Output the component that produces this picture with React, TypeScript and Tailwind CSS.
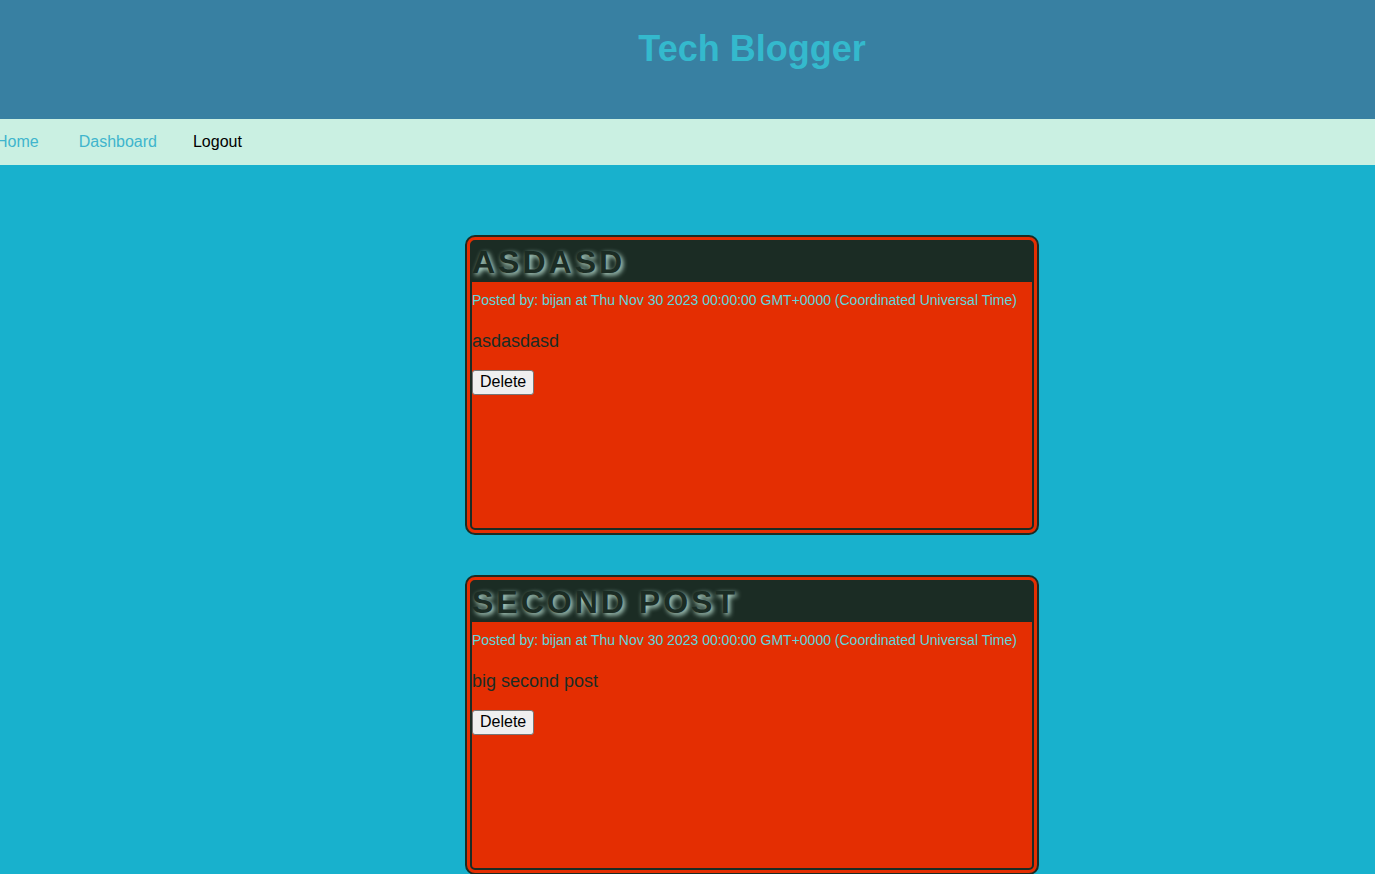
import React from "react";

type Post = { id: number; title: string; body: string; author: string; date: string };

const posts: Post[] = [
  {
    id: 1,
    title: "asdasd",
    body: "asdasdasd",
    author: "bijan",
    date: "Thu Nov 30 2023 00:00:00 GMT+0000 (Coordinated Universal Time)",
  },
  {
    id: 2,
    title: "second post",
    body: "big second post",
    author: "bijan",
    date: "Thu Nov 30 2023 00:00:00 GMT+0000 (Coordinated Universal Time)",
  },
];

function PostCard({ post }: { post: Post }) {
  return (
    <article className="flex min-h-[300px] w-[574px] max-w-full flex-col items-start rounded-[10px] border-[7px] border-double border-[#1b2c24] bg-[#e42e02]">
      <h2 className="w-full bg-[#1b2c24] text-[32px] leading-10 font-bold tracking-[3px] text-[#1b2c24] uppercase [text-shadow:2px_2px_5px_#caf0e2]">
        {post.title}
      </h2>
      <p className="pt-2 text-[14px] leading-5 whitespace-nowrap text-[#5fd6dc]">
        Posted by: {post.author} at {post.date}
      </p>
      <p className="pt-5 text-lg leading-[22px] text-[#1b2c24]">{post.body}</p>
      <button
        type="button"
        className="mt-[18px] h-[25px] rounded-[3px] border border-[#767676] bg-[#efefef] px-[7px] pb-0.5 text-base leading-5 text-black"
      >
        Delete
      </button>
    </article>
  );
}

export default function App() {
  return (
    <div className="min-h-screen overflow-x-hidden bg-[#18b1cd] font-['Liberation_Sans',Arial,sans-serif]">
      <header className="bg-[#3880a2] pt-[25px] pb-[46px] pl-[129px] text-center">
        <h1 className="text-4xl leading-[48px] font-bold text-[#34b9cd]">Tech Blogger</h1>
      </header>
      <nav className="-ml-1 flex h-[46px] items-center bg-[#caf0e2] text-base text-[#40b5cd]">
        <a href="#home">Home</a>
        <a href="#dashboard" className="ml-10">Dashboard</a>
        <button type="button" className="ml-9 text-black">Logout</button>
      </nav>
      <main className="flex flex-col items-center gap-10 pt-[70px] pl-[129px]">
        {posts.map((post) => (
          <PostCard key={post.id} post={post} />
        ))}
      </main>
    </div>
  );
}
